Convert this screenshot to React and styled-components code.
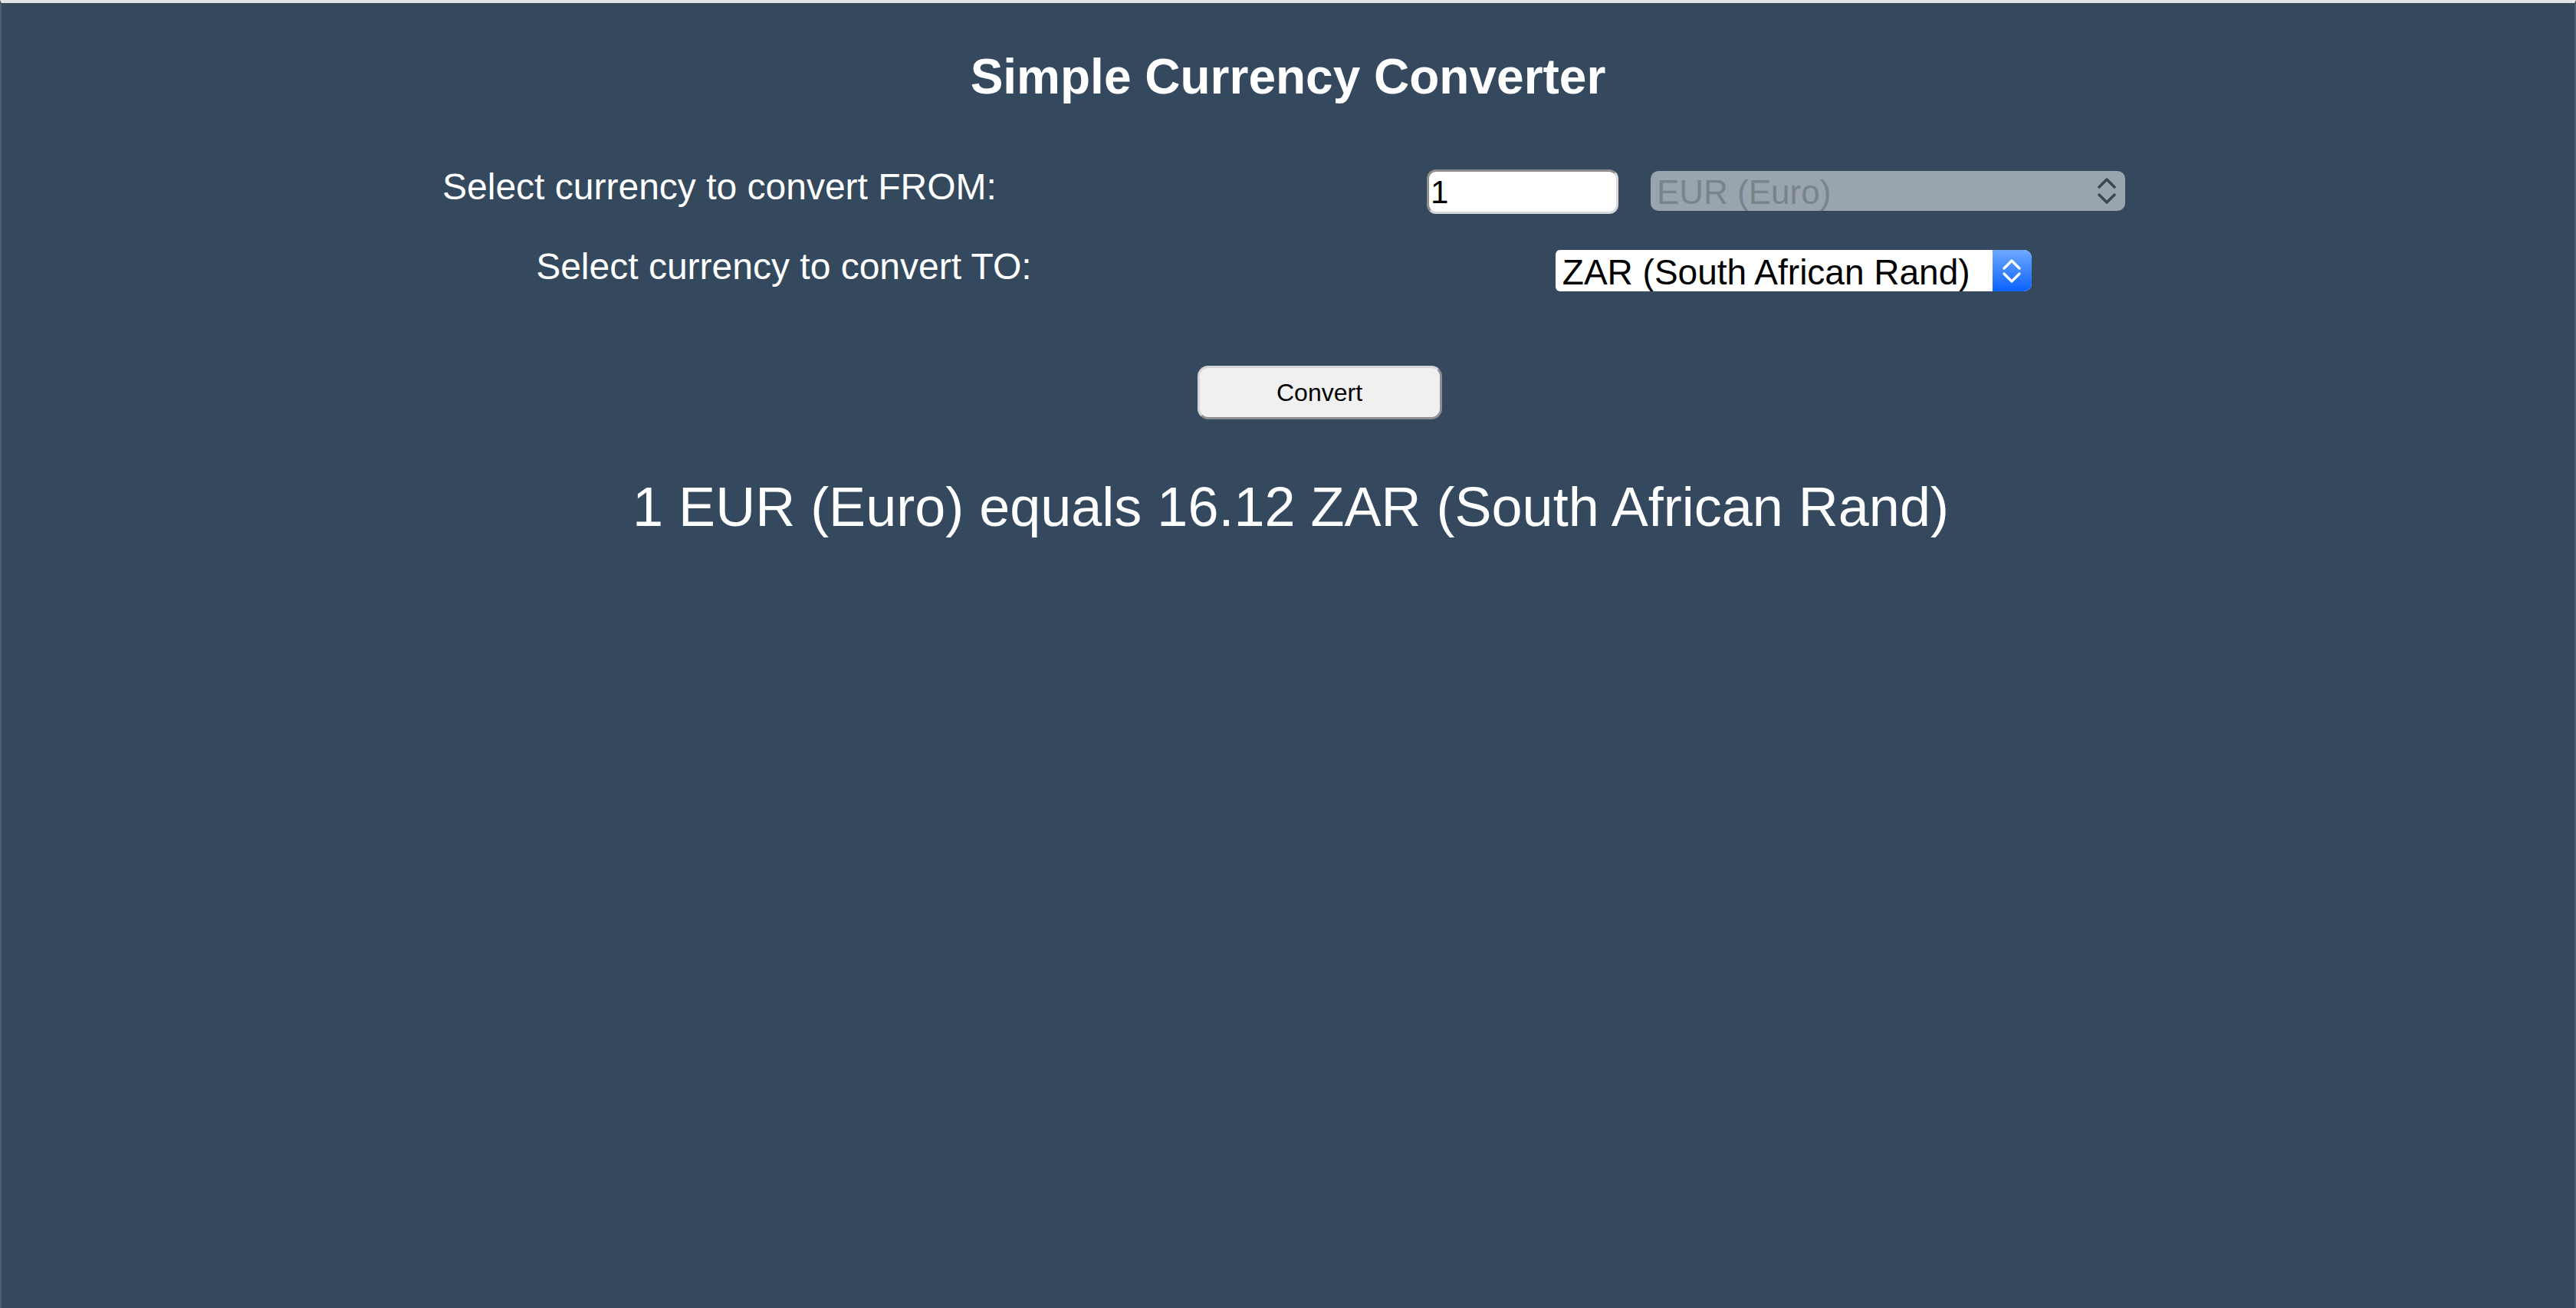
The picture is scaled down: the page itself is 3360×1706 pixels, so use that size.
import React, { useState } from "react";
import styled, { createGlobalStyle } from "styled-components";

const RATES = { EUR: 1, ZAR: 16.12 };

const GlobalStyle = createGlobalStyle`
  html, body {
    margin: 0;
    background-color: #34495e;
    font-family: "Liberation Sans", Arial, sans-serif;
  }
`;

const Chevrons = ({ color, width = 24, height = 34, stroke = 3.5 }) => (
  <svg width={width} height={height} viewBox={`0 0 24 ${height}`} fill="none">
    <path
      d={`M2 12 L12 2 L22 12`}
      stroke={color}
      strokeWidth={stroke}
      strokeLinecap="round"
      strokeLinejoin="round"
    />
    <path
      d={`M2 ${height - 12} L12 ${height - 2} L22 ${height - 12}`}
      stroke={color}
      strokeWidth={stroke}
      strokeLinecap="round"
      strokeLinejoin="round"
    />
  </svg>
);

const App = () => {
  const [amount, setAmount] = useState("1");
  const result = (parseFloat(amount || "0") * RATES.ZAR).toFixed(2);

  return (
    <Wrapper>
      <GlobalStyle />
      <Title>Simple Currency Converter</Title>

      <Row $top={79}>
        <Label>Select currency to convert FROM:</Label>
        <Controls>
          <AmountInput
            type="number"
            value={amount}
            onChange={(e) => setAmount(e.target.value)}
            $offset={5}
          />
          <SelectWrap $offset={7}>
            <DisabledSelect disabled defaultValue="EUR">
              <option value="EUR">EUR (Euro)</option>
            </DisabledSelect>
            <DisabledArrow>
              <Chevrons color="#3c4651" />
            </DisabledArrow>
          </SelectWrap>
        </Controls>
      </Row>

      <Row $top={41}>
        <Label>Select currency to convert TO:</Label>
        <Controls>
          <SelectWrap $offset={6}>
            <TargetSelect defaultValue="ZAR">
              <option value="ZAR">ZAR (South African Rand)</option>
              <option value="USD">USD (US Dollar)</option>
              <option value="GBP">GBP (British Pound)</option>
            </TargetSelect>
            <BlueArrow>
              <Chevrons color="#ffffff" height={31} stroke={3.2} />
            </BlueArrow>
          </SelectWrap>
        </Controls>
      </Row>

      <ButtonRow>
        <ConvertButton type="button">Convert</ConvertButton>
      </ButtonRow>

      <Result>
        {amount || 0} EUR (Euro) equals {result} ZAR (South African Rand)
      </Result>
    </Wrapper>
  );
};

const Wrapper = styled.main`
  min-height: 100vh;
  box-sizing: border-box;
  border-top: 4px solid #e2e3e5;
  border-left: 2px solid #4b5c6e;
  border-right: 2px solid #4b5c6e;
  padding: 0 25px 0 14px;
  color: #ffffff;
  display: flex;
  flex-direction: column;
`;

const Title = styled.h1`
  margin: 59px 0 0;
  padding-left: 11px;
  font-size: 64px;
  line-height: 74px;
  font-weight: 700;
  text-align: center;
`;

const Row = styled.div`
  margin-top: ${(p) => p.$top}px;
  display: flex;
  justify-content: space-evenly;
  align-items: flex-start;
`;

const Label = styled.label`
  font-size: 48px;
  line-height: 56px;
  white-space: nowrap;
`;

const Controls = styled.div`
  display: flex;
  align-items: flex-start;
  gap: 42px;
`;

const AmountInput = styled.input`
  margin-top: ${(p) => p.$offset}px;
  box-sizing: border-box;
  width: 250px;
  height: 58px;
  padding: 2px 2px 0;
  border: 3px solid;
  border-color: #8e8e8e #d8d8d8 #d8d8d8 #8e8e8e;
  border-radius: 12px;
  background: #ffffff;
  color: #000000;
  font-family: "Liberation Sans", Arial, sans-serif;
  font-size: 42px;
  outline: none;
  -moz-appearance: textfield;

  &::-webkit-outer-spin-button,
  &::-webkit-inner-spin-button {
    -webkit-appearance: none;
    margin: 0;
  }
`;

const SelectWrap = styled.div`
  margin-top: ${(p) => p.$offset}px;
  position: relative;
  display: flex;
`;

const BaseSelect = styled.select`
  appearance: none;
  -webkit-appearance: none;
  box-sizing: border-box;
  border: none;
  outline: none;
  margin: 0;
  font-family: "Liberation Sans", Arial, sans-serif;
`;

const DisabledSelect = styled(BaseSelect)`
  width: 619px;
  height: 52px;
  padding: 3px 60px 0 8px;
  border-radius: 10px;
  background: #9aa4ae;
  color: #78838e;
  font-size: 44px;
  opacity: 1;
`;

const DisabledArrow = styled.span`
  position: absolute;
  right: 12px;
  top: 9px;
  display: flex;
  pointer-events: none;
`;

const TargetSelect = styled(BaseSelect)`
  width: 621px;
  height: 54px;
  padding: 3px 60px 0 9px;
  border-radius: 6px 10px 10px 6px;
  background: #ffffff;
  color: #000000;
  font-size: 46px;
  cursor: pointer;
`;

const BlueArrow = styled.span`
  position: absolute;
  right: 0;
  top: 0;
  width: 51px;
  height: 54px;
  border-radius: 0 10px 10px 0;
  background: linear-gradient(#6ea8ff, #0a62ff);
  display: flex;
  align-items: center;
  justify-content: center;
  pointer-events: none;
`;

const ButtonRow = styled.div`
  margin-top: 97px;
  padding-left: 93px;
  display: flex;
  justify-content: center;
`;

const ConvertButton = styled.button`
  box-sizing: border-box;
  width: 319px;
  height: 70px;
  border: 3px solid;
  border-color: #d6d6d6 #8f8f8f #8f8f8f #d6d6d6;
  border-radius: 14px;
  background: #f0f0f0;
  color: #000000;
  font-family: "Liberation Sans", Arial, sans-serif;
  font-size: 32px;
  cursor: pointer;
`;

const Result = styled.h2`
  margin: 72px 0 0;
  padding-left: 18px;
  font-size: 72px;
  line-height: 84px;
  font-weight: 400;
  text-align: center;
`;

export default App;
